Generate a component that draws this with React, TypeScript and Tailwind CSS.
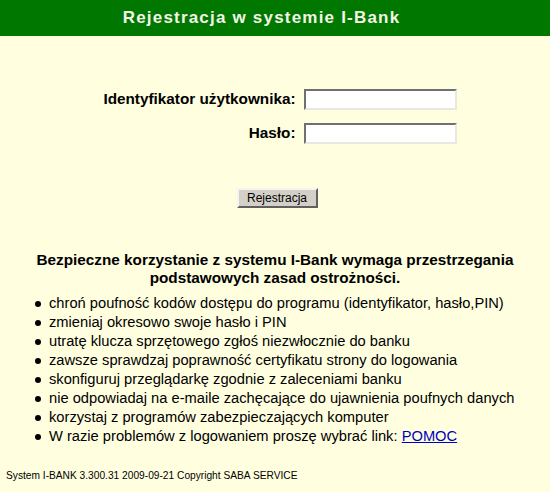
import React from "react";

const rules = [
  "chroń poufność kodów dostępu do programu (identyfikator, hasło,PIN)",
  "zmieniaj okresowo swoje hasło i PIN",
  "utratę klucza sprzętowego zgłoś niezwłocznie do banku",
  "zawsze sprawdzaj poprawność certyfikatu strony do logowania",
  "skonfiguruj przeglądarkę zgodnie z zaleceniami banku",
  "nie odpowiadaj na e-maile zachęcające do ujawnienia poufnych danych",
  "korzystaj z programów zabezpieczających komputer",
];

const inputCls =
  "h-[21px] w-[153px] bg-white border-2 border-t-[#707070] border-l-[#707070] border-b-[#e8e8e0] border-r-[#e8e8e0] outline-none";

function Dot() {
  return <span className="ml-[3px] mr-[8px] mt-[2px] w-[6px] h-[6px] rounded-full bg-black shrink-0" />;
}

export default function App() {
  return (
    <div
      className="w-[550px] h-[492px] bg-[#ffffe0] text-black overflow-hidden"
      style={{ fontFamily: '"Liberation Sans", Arial, sans-serif' }}
    >
      <div className="h-[36px] bg-[#007800] flex items-center justify-center pr-[27px]">
        <h1 className="text-[17px] font-bold tracking-[1.2px] text-[#f4f4e8]">
          Rejestracja w systemie I-Bank
        </h1>
      </div>

      <div className="mt-[52px] pl-[4px] grid grid-cols-[198px_153px] justify-center items-center gap-x-[8px] gap-y-[11px]">
        <label className="text-right font-bold text-[15.3px]">Identyfikator użytkownika:</label>
        <input type="text" className={inputCls} />
        <label className="text-right font-bold text-[15.3px]">Hasło:</label>
        <input type="password" className={inputCls} />
      </div>

      <div className="mt-[43px] flex justify-center pl-[4px]">
        <button className="h-[20px] w-[81px] bg-[#d4d0c8] text-[12px] leading-none border-2 border-t-[#f4f4f0] border-l-[#f4f4f0] border-b-[#606060] border-r-[#606060]">
          Rejestracja
        </button>
      </div>

      <p className="mt-[43px] text-center font-bold text-[15.3px] leading-[18px] px-2">
        Bezpieczne korzystanie z systemu I-Bank wymaga przestrzegania
        <br />
        podstawowych zasad ostrożności.
      </p>

      <ul className="mt-[7px] ml-[32px] text-[14.7px] leading-[19px]">
        {rules.map((r) => (
          <li key={r} className="flex items-center h-[19px]">
            <Dot />
            <span>{r}</span>
          </li>
        ))}
        <li className="flex items-center h-[19px]">
          <Dot />
          <span>
            W razie problemów z logowaniem proszę wybrać link:{" "}
            <a href="#" className="text-[#0000c0] underline">
              POMOC
            </a>
          </span>
        </li>
      </ul>

      <div className="mt-[22px] ml-[6px] text-[10.2px]">
        System I-BANK 3.300.31 2009-09-21 Copyright SABA SERVICE
      </div>
    </div>
  );
}
